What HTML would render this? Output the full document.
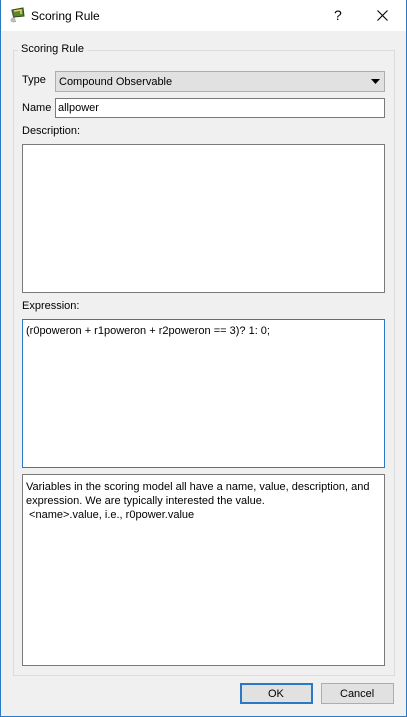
<!DOCTYPE html>
<html><head><style>
*{margin:0;padding:0;box-sizing:border-box}
body{width:407px;height:717px;overflow:hidden;background:#f0f0f0;font-family:"Liberation Sans",sans-serif;font-size:11px;color:#000;position:relative}
.a{position:absolute}
.win{left:0;top:0;width:407px;height:717px;border:1px solid #2b79c2;border-top:none}
.title{left:1px;top:0;width:405px;height:31px;background:#fff}
.box{background:#fff;border:1px solid #7a7a7a}
.t{white-space:nowrap}
</style></head><body>
<div class="a title"></div>
<svg class="a" style="left:9px;top:7px" width="18" height="16" viewBox="0 0 18 16">
<path d="M3 3 L14 1 L15 9 L5 10 Z" fill="#5a8a2a" stroke="#2d4d12" stroke-width="1"/>
<path d="M5 4 L12 3 L12 7" fill="none" stroke="#e8d070" stroke-width="1.5"/>
<path d="M3 3 L6 15" stroke="#555" stroke-width="1.5"/>
<circle cx="4" cy="13" r="2.5" fill="#bbb"/>
</svg>
<div class="a t" style="left:31px;top:9px;font-size:12px">Scoring Rule</div>
<div class="a t" style="left:334px;top:7px;font-size:14px">?</div>
<svg class="a" style="left:377px;top:10px" width="11" height="11"><path d="M0.5 0.5L10.5 10.5M10.5 0.5L0.5 10.5" stroke="#000" stroke-width="1.1"/></svg>
<div class="a win"></div>
<div class="a" style="left:13px;top:50px;width:382px;height:626px;border:1px solid #dcdcdc"></div>
<div class="a t" style="left:18px;top:43px;background:#f0f0f0;padding:0 3px">Scoring Rule</div>
<div class="a t" style="left:22px;top:74px">Type</div>
<div class="a" style="left:55px;top:71px;width:330px;height:21px;background:#e1e1e1;border:1px solid #adadad"></div>
<div class="a t" style="left:59px;top:76px">Compound Observable</div>
<svg class="a" style="left:371px;top:79px" width="9" height="5"><path d="M0 0H9L4.5 5Z" fill="#000"/></svg>
<div class="a t" style="left:22px;top:102px">Name</div>
<div class="a box" style="left:55px;top:98px;width:330px;height:20px"></div>
<div class="a t" style="left:58px;top:102px">allpower</div>
<div class="a t" style="left:22px;top:125px">Description:</div>
<div class="a box" style="left:22px;top:144px;width:363px;height:149px"></div>
<div class="a t" style="left:22px;top:300px">Expression:</div>
<div class="a box" style="left:22px;top:319px;width:363px;height:149px;border-color:#2b79c2"></div>
<div class="a t" style="left:26px;top:325px">(r0poweron + r1poweron + r2poweron == 3)? 1: 0;</div>
<div class="a box" style="left:22px;top:474px;width:363px;height:192px"></div>
<div class="a" style="left:26px;top:480px;line-height:14px">Variables in the scoring model all have a name, value, description, and<br>expression. We are typically interested the value.<br>&nbsp;&lt;name&gt;.value, i.e., r0power.value</div>
<div class="a" style="left:240px;top:683px;width:73px;height:21px;background:#e1e1e1;border:2px solid #2b79c2"></div>
<div class="a t" style="left:268px;top:688px">OK</div>
<div class="a" style="left:321px;top:683px;width:73px;height:21px;background:#e1e1e1;border:1px solid #adadad"></div>
<div class="a t" style="left:340px;top:688px">Cancel</div>
</body></html>
